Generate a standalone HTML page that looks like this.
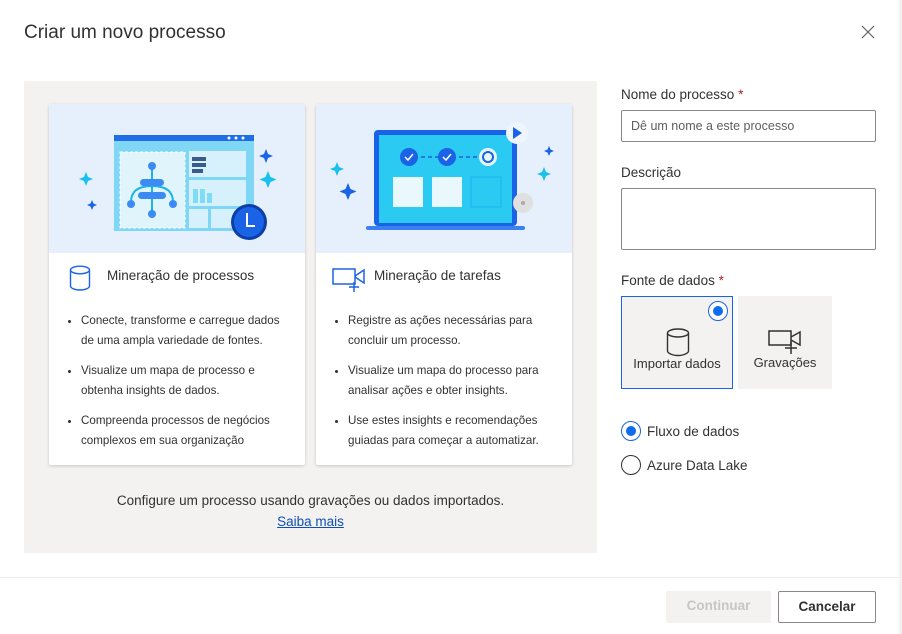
<!DOCTYPE html>
<html><head><meta charset="utf-8"><style>
*{box-sizing:border-box;margin:0;padding:0}
body{width:902px;height:634px;background:#e8e8e8;font-family:"Liberation Sans",sans-serif;color:#323130;position:relative;overflow:hidden}
.dlg{position:absolute;left:0;top:0;width:899px;height:634px;background:#fff}
.strip{position:absolute;left:899px;top:0;width:3px;height:634px;background:#f3f2f1}
.a{position:absolute}
.title{left:24px;top:22px;font-size:19px;color:#323130}
.panel{left:24px;top:81px;width:573px;height:472px;background:#f3f2f1}
.card{top:104px;width:256px;height:361px;background:#fff;border-radius:2px;box-shadow:0 1px 3px rgba(0,0,0,.18);overflow:hidden}
.ill{height:149px;background:#e6effc;position:relative}
.ct{position:absolute;left:58px;top:164px;font-size:13.5px;color:#323130}
ul{position:absolute;left:32px;top:207px;width:206px;font-size:11.6px;line-height:20px;color:#323130}
li{margin-bottom:10px}
.lbl{font-size:13.5px;color:#323130}
.req{color:#a4262c}
.in{border:1px solid #8a8886;border-radius:2px;background:#fff}
.tile{top:296px;width:112px;height:93px;font-size:13px;text-align:center}
.rad{width:20px;height:20px;border-radius:50%;border:1px solid #323130;background:#fff}
.btn{top:591px;height:32px;border-radius:2px;font-size:13.5px;font-weight:bold;text-align:center;line-height:30px}
</style></head><body>
<div class="dlg">
<div class="a title">Criar um novo processo</div>
<svg class="a" style="left:861px;top:25px" width="14" height="14" viewBox="0 0 14 14"><path d="M1 1L13 13M13 1L1 13" stroke="#605e5c" stroke-width="1.2"/></svg>
<div class="a panel"></div>

<div class="a card" style="left:49px">
 <div class="ill">
  <svg width="256" height="149" viewBox="0 0 256 149">
   <rect x="65" y="31" width="140" height="96" fill="#7fd6f5"/>
   <rect x="65" y="31" width="140" height="6" fill="#1f6ee8"/>
   <circle cx="180" cy="34" r="1.5" fill="#fff"/><circle cx="187" cy="34" r="1.5" fill="#fff"/><circle cx="194" cy="34" r="1.5" fill="#fff"/>
   <rect x="71" y="48" width="65" height="76" fill="#dff4fb" stroke="#fff" stroke-dasharray="3 2"/>
   <rect x="140" y="47" width="57" height="26" fill="#d6f1fb"/>
   <rect x="140" y="76" width="57" height="26" fill="#d6f1fb"/>
   <rect x="140" y="105" width="19" height="19" fill="#d6f1fb"/><rect x="162" y="105" width="35" height="19" fill="#d6f1fb"/>
   <rect x="143" y="53" width="14" height="4" fill="#3a5a8a"/><rect x="143" y="59" width="14" height="4" fill="#3a5a8a"/><rect x="143" y="65" width="11" height="4" fill="#3a5a8a"/>
   <rect x="144" y="85" width="5" height="14" fill="#7fdcf5"/><rect x="151" y="85" width="5" height="14" fill="#7fdcf5"/><rect x="158" y="89" width="5" height="10" fill="#7fdcf5"/>
   <path d="M82 98Q82 82 103 82Q124 82 124 98" stroke="#1ab3f0" stroke-width="2" fill="none"/>
   <line x1="103" y1="62" x2="103" y2="110" stroke="#1ab3f0" stroke-width="2"/>
   <circle cx="103" cy="62" r="4" fill="#3b8bf2"/><rect x="91" y="75" width="24" height="7" rx="3.5" fill="#3b8bf2"/><rect x="89" y="88" width="28" height="7" rx="3.5" fill="#3b8bf2"/>
   <circle cx="82" cy="100" r="4" fill="#3b8bf2"/><circle cx="124" cy="100" r="4" fill="#3b8bf2"/><circle cx="103" cy="110" r="4" fill="#3b8bf2"/>
   <circle cx="200" cy="118" r="18" fill="#0a3fa8"/><circle cx="200" cy="118" r="15" fill="#1a63e6"/>
   <path d="M198 109V122H206" stroke="#fff" stroke-width="2" fill="none"/>
   <path d="M217 45l2 5 5 2-5 2-2 5-2-5-5-2 5-2z" fill="#1a63e6"/>
   <path d="M219 67l2.5 6 6 2.5-6 2.5-2.5 6-2.5-6-6-2.5 6-2.5z" fill="#18c0ee"/>
   <path d="M37 68l2 5 5 2-5 2-2 5-2-5-5-2 5-2z" fill="#18c0ee"/>
   <path d="M43 96l1.5 3.5 3.5 1.5-3.5 1.5-1.5 3.5-1.5-3.5-3.5-1.5 3.5-1.5z" fill="#1a63e6"/>
  </svg>
 </div>
 <svg class="a" style="left:20px;top:161px" width="22" height="26" viewBox="0 0 22 26"><ellipse cx="11" cy="5" rx="9.5" ry="3.8" fill="none" stroke="#1a63e6" stroke-width="1.4"/><path d="M1.5 5V21C1.5 23 5.5 25 11 25S20.5 23 20.5 21V5" fill="none" stroke="#1a63e6" stroke-width="1.4"/></svg>
 <div class="ct">Mineração de processos</div>
 <ul><li>Conecte, transforme e carregue dados de uma ampla variedade de fontes.</li><li>Visualize um mapa de processo e obtenha insights de dados.</li><li>Compreenda processos de negócios complexos em sua organização</li></ul>
</div>

<div class="a card" style="left:316px">
 <div class="ill">
  <svg width="256" height="149" viewBox="0 0 256 149">
   <rect x="58" y="26" width="143" height="96" rx="4" fill="#1a63e6"/>
   <rect x="63" y="31" width="133" height="88" fill="#2bcaf3"/>
   <rect x="50" y="122" width="159" height="4" rx="2" fill="#3b7ff0"/>
   <circle cx="93" cy="53" r="9" fill="#1a63e6"/><path d="M89 53l3 3 5-6" stroke="#fff" stroke-width="1.5" fill="none"/>
   <circle cx="131" cy="53" r="9" fill="#1a63e6"/><path d="M127 53l3 3 5-6" stroke="#fff" stroke-width="1.5" fill="none"/>
   <circle cx="172" cy="53" r="9" fill="#e6f6fd"/><circle cx="172" cy="53" r="5" fill="none" stroke="#1a63e6" stroke-width="2"/>
   <path d="M105 53h18M143 53h18" stroke="#1a63e6" stroke-dasharray="4 3" stroke-width="1.5"/>
   <rect x="77" y="73" width="30" height="30" fill="#e8f8fd"/><rect x="116" y="73" width="30" height="30" fill="#e8f8fd"/><rect x="155" y="73" width="30" height="30" fill="none" stroke="#1ab3f0"/>
   <circle cx="201" cy="29" r="11" fill="#eef5fd"/><path d="M197 23v12l9-6z" fill="#1a63e6"/>
   <circle cx="207" cy="99" r="10" fill="#e0e0e0"/><circle cx="207" cy="99" r="2" fill="#aaa"/>
   <path d="M21 58l2 5 5 2-5 2-2 5-2-5-5-2 5-2z" fill="#18c0ee"/>
   <path d="M32 79l2.5 6 6 2.5-6 2.5-2.5 6-2.5-6-6-2.5 6-2.5z" fill="#1a63e6"/>
   <path d="M233 42l1.5 3.5 3.5 1.5-3.5 1.5-1.5 3.5-1.5-3.5-3.5-1.5 3.5-1.5z" fill="#1a63e6"/>
   <path d="M228 63l2 5 5 2-5 2-2 5-2-5-5-2 5-2z" fill="#18c0ee"/>
  </svg>
 </div>
 <svg class="a" style="left:16px;top:163px" width="34" height="26" viewBox="0 0 34 26"><rect x="1" y="2" width="22" height="15" fill="none" stroke="#1a63e6" stroke-width="1.5"/><path d="M23 9L32 3V16L23 10" fill="none" stroke="#1a63e6" stroke-width="1.5"/><path d="M22 15V25M17 20H27" stroke="#1a63e6" stroke-width="1.5"/></svg>
 <div class="ct">Mineração de tarefas</div>
 <ul><li>Registre as ações necessárias para concluir um processo.</li><li>Visualize um mapa do processo para analisar ações e obter insights.</li><li>Use estes insights e recomendações guiadas para começar a automatizar.</li></ul>
</div>

<div class="a" style="left:24px;top:490px;width:573px;text-align:center;font-size:13.5px;line-height:21px">Configure um processo usando gravações ou dados importados.<br><span style="color:#0f4fb5;text-decoration:underline">Saiba mais</span></div>

<div class="a lbl" style="left:621px;top:87px">Nome do processo <span class="req">*</span></div>
<div class="a in" style="left:621px;top:110px;width:255px;height:32px;font-size:12.5px;color:#605e5c;padding:8px 9px">Dê um nome a este processo</div>
<div class="a lbl" style="left:621px;top:165px">Descrição</div>
<div class="a in" style="left:621px;top:188px;width:255px;height:62px"></div>
<div class="a lbl" style="left:621px;top:273px">Fonte de dados <span class="req">*</span></div>

<div class="a tile" style="left:621px;border:1px solid #1a63e6;background:#f3f2f1">
 <div class="a" style="right:4px;top:4px;width:20px;height:20px;border-radius:50%;border:1px solid #1a63e6;background:#fff"><div style="margin:4px;width:10px;height:10px;border-radius:50%;background:#0f6cef"></div></div>
 <svg class="a" style="left:44px;top:31px" width="24" height="29" viewBox="0 0 24 29"><ellipse cx="12" cy="5" rx="10.5" ry="4" fill="none" stroke="#323130" stroke-width="1.4"/><path d="M1.5 5V23C1.5 25 6 27.5 12 27.5S22.5 25 22.5 23V5" fill="none" stroke="#323130" stroke-width="1.4"/></svg>
 <div class="a" style="left:0;width:110px;top:59px">Importar dados</div>
</div>
<div class="a tile" style="left:738px;background:#f3f2f1;width:94px">
 <svg class="a" style="left:30px;top:33px" width="34" height="26" viewBox="0 0 34 26"><rect x="1" y="2" width="22" height="14" fill="none" stroke="#323130" stroke-width="1.5"/><path d="M23 8L32 3V16L23 11" fill="none" stroke="#323130" stroke-width="1.5"/><path d="M23 13V25M17 19H29" stroke="#323130" stroke-width="1.5"/></svg>
 <div class="a" style="left:0;width:94px;top:59px">Gravações</div>
</div>

<div class="a rad" style="left:621px;top:421px;border-color:#1a63e6"><div style="margin:4px;width:10px;height:10px;border-radius:50%;background:#0f6cef"></div></div>
<div class="a" style="left:647px;top:424px;font-size:13.5px">Fluxo de dados</div>
<div class="a rad" style="left:621px;top:455px"></div>
<div class="a" style="left:647px;top:458px;font-size:13.5px">Azure Data Lake</div>

<div class="a" style="left:0;top:577px;width:899px;height:1px;background:#edebe9"></div>
<div class="a btn" style="left:666px;width:105px;background:#f3f2f1;color:#c8c6c4">Continuar</div>
<div class="a btn" style="left:778px;width:98px;border:1px solid #8a8886;background:#fff;color:#323130">Cancelar</div>
</div>
<div class="strip"></div>
</body></html>
